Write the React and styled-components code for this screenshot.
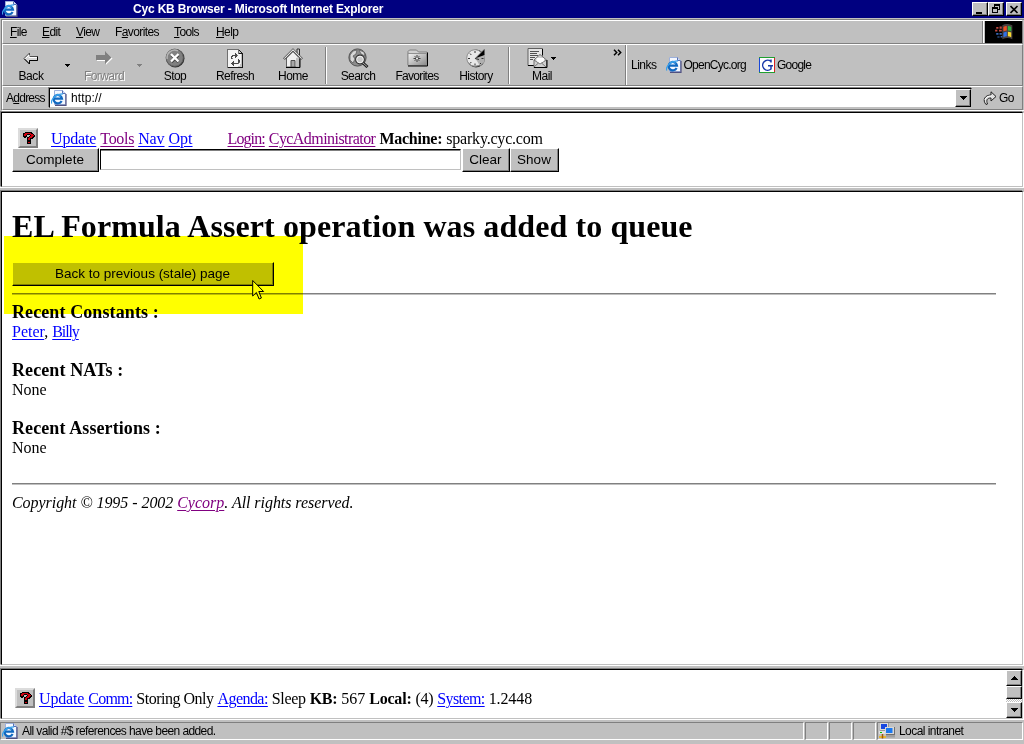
import React from "react";
import styled, { createGlobalStyle, css } from "styled-components";

const GlobalStyle = createGlobalStyle`
  *, *::before, *::after { box-sizing: border-box; }
  body { margin: 0; background: #c0c0c0; overflow: hidden; }
  svg { display: block; flex: none; }
`;

const Window = styled.div`
  width: 1024px;
  height: 744px;
  display: flex;
  flex-direction: column;
  background: #c0c0c0;
  color: #000;
  font: 12px/14px "Liberation Sans", Arial, sans-serif;
  white-space: pre;
`;

const T = styled.span`
  letter-spacing: ${(p) => p.$ls || 0}px;
`;

const TitleBar = styled.header`
  height: 18px;
  flex: none;
  display: flex;
  align-items: center;
  background: #000080;
  padding: 0 2px 0 2px;
`;
const TitleText = styled.div`
  flex: 1;
  padding-left: 115px;
  color: #fff;
  font-weight: bold;
`;
const raised = css`
  background: #c0c0c0;
  border: 1px solid;
  border-color: #fff #000 #000 #fff;
  box-shadow: inset -1px -1px #808080;
`;
const CaptionButton = styled.div`
  ${raised}
  width: 16px;
  height: 14px;
  margin-left: ${(p) => p.$gap || 0}px;
  display: flex;
  align-items: center;
  justify-content: center;
`;

const Chrome = styled.div`
  flex: none;
  height: 92px;
  margin: 1px 0 0 1px;
  display: flex;
  flex-direction: column;
  border-top: 1px solid #808080;
  border-left: 1px solid #808080;
  border-bottom: 1px solid #fff;
`;
const Band = styled.div`
  display: flex;
  height: ${(p) => p.$h}px;
  border: 1px solid;
  border-color: #fff #808080 #808080 #fff;
  margin-right: 1px;
`;
const MenuBar = styled(Band)`
  padding-left: 7px;
`;
const MenuItem = styled.div`
  width: ${(p) => p.$w}px;
  padding-top: 4px;
`;
const Throbber = styled.div`
  margin-left: auto;
  width: 40px;
  padding-left: 2px;
  border-left: 1px solid #808080;
  box-shadow: inset 1px 0 #fff;
`;
const ThrobberBox = styled.div`
  height: 22px;
  background: #000;
  display: flex;
  align-items: center;
  justify-content: center;
`;
const Tool = styled.div`
  width: ${(p) => p.$w}px;
  padding-top: 3px;
  display: flex;
  flex-direction: column;
  align-items: center;
  ${(p) => p.$disabled && "color: #808080; text-shadow: 1px 1px #fff;"}
`;
const ToolIcon = styled.div`
  height: 20px;
  margin-bottom: 1px;
  margin-right: ${(p) => p.$mr || 0}px;
  display: flex;
  align-items: center;
`;
const Drop = styled.div`
  width: ${(p) => p.$w}px;
  padding-top: ${(p) => p.$pt || 19}px;
  margin-left: ${(p) => p.$ml || 0}px;
  display: flex;
  justify-content: center;
`;
const Divider = styled.div`
  width: 2px;
  height: 37px;
  margin: 2px ${(p) => p.$m}px;
  border-left: 1px solid #808080;
  border-right: 1px solid #fff;
`;
const LinksBand = styled.div`
  flex: 1;
  display: flex;
  align-items: center;
  padding-left: 4px;
  border-left: 1px solid #fff;
`;
const Chevron = styled.div`
  padding: 4px 2px 0 0;
  border-right: 1px solid #808080;
`;
const Gap = styled.span`
  width: ${(p) => p.$w}px;
  flex: none;
`;
const AddressField = styled.div`
  width: 923px;
  height: 20px;
  margin-left: 2px;
  padding-left: 1px;
  display: flex;
  align-items: center;
  background: #fff;
  border: 1px solid;
  border-color: #000 #c0c0c0 #c0c0c0 #000;
  box-shadow: -1px -1px #808080;
  margin-top: 1px;
`;
const ComboButton = styled.div`
  ${raised}
  width: 16px;
  height: 18px;
  margin-left: auto;
  display: flex;
  align-items: center;
  justify-content: center;
`;
const AddressLabel = styled.div`
  width: 44px;
  padding: 4px 0 0 3px;
`;
const Go = styled.div`
  display: flex;
  padding: 4px 0 0 11px;
`;

const Frame = styled.section`
  position: relative;
  flex: none;
  height: ${(p) => p.$h}px;
  background: #fff;
  border-top: 1px solid #000;
  border-left: 1px solid #000;
  border-bottom: 1px solid #c0c0c0;
  border-right: 1px solid #c0c0c0;
  margin: 1px 1px 0 1px;
  box-shadow: -1px -1px #808080, 1px 1px #fff;
  font: 16px/19px "Liberation Serif", "Times New Roman", serif;
`;
const Splitter = styled.div`
  height: 3px;
  flex: none;
  border-top: 1px solid #fff;
`;
const Link = styled.a`
  color: ${(p) => (p.$visited ? "#800080" : "#0000ff")};
  text-decoration: underline;
  text-decoration-thickness: 1px;
  text-underline-offset: 2px;
  letter-spacing: ${(p) => p.$ls || 0}px;
`;
const Bold = styled.b`
  letter-spacing: ${(p) => p.$ls || 0}px;
`;
const NavRow = styled.div`
  display: flex;
  align-items: center;
  height: 20px;
  margin: ${(p) => p.$m};
`;
const QueryRow = styled.div`
  display: flex;
  margin: 0 0 0 10px;
`;
const PageButton = styled.button`
  ${raised}
  width: ${(p) => p.$w}px;
  height: 24px;
  margin: 0;
  padding: 0 1px 0 0;
  border-width: 1px;
  font: 13.5px/18px "Liberation Sans", Arial, sans-serif;
  color: #000;
  white-space: pre;
  text-align: center;
`;
const QueryInput = styled.div`
  width: 361px;
  height: 21px;
  margin: 1px 1px 0 1px;
  border: 1px solid;
  border-color: #000 #c0c0c0 #c0c0c0 #000;
  box-shadow: inset 0 1px #808080;
`;
const HelpBox = styled.div`
  width: 20px;
  height: 20px;
  background: #c0c0c0;
  border: 2px solid;
  border-color: #dcdcdc #808080 #808080 #dcdcdc;
  display: flex;
  align-items: center;
  justify-content: center;
`;
const H1 = styled.h1`
  margin: 0;
  padding: 16px 0 0 10px;
  font-size: 32px;
  line-height: 37px;
  font-weight: bold;
  letter-spacing: 0.09px;
`;
const StaleRow = styled.div`
  padding: 17px 0 0 10px;
  display: flex;
`;
const Rule = styled.div`
  height: 2px;
  width: 984px;
  margin: 7px 0 0 10px;
  background: #c0c0c0;
  border-top: 1px solid #808080;
`;
const Recents = styled.div`
  padding: 7px 0 0 10px;
`;
const Block = styled.div`
  height: 58px;
`;
const BlockTitle = styled.h2`
  margin: 0;
  font-size: 18px;
  line-height: 20px;
  letter-spacing: 0.1px;
`;
const Copyright = styled.p`
  margin: 0;
  padding: 8px 0 0 10px;
  font-style: italic;
  letter-spacing: -0.05px;
`;
const Highlight = styled.div`
  position: absolute;
  left: 2px;
  top: 44px;
  width: 299px;
  height: 78px;
  background: #ffff00;
  mix-blend-mode: multiply;
`;
const Pointer = styled.div`
  position: absolute;
  left: 250px;
  top: 87px;
`;
const BottomFrame = styled(Frame)`
  display: flex;
`;
const ScrollBar = styled.div`
  width: 16px;
  margin-left: auto;
  display: flex;
  flex-direction: column;
  background: repeating-conic-gradient(#c0c0c0 0 25%, #fff 0 50%) 0 0 / 2px 2px;
`;
const ScrollPart = styled.div`
  ${raised}
  height: ${(p) => p.$h}px;
  margin-top: ${(p) => p.$mt || 0};
  display: flex;
  align-items: center;
  justify-content: center;
`;
const StatusBar = styled.footer`
  flex: none;
  height: 24px;
  padding-top: 2px;
  border-top: 1px solid #fff;
  display: flex;
`;
const StatusCell = styled.div`
  width: ${(p) => p.$w}px;
  height: 18px;
  margin-right: 1px;
  padding-left: ${(p) => p.$pl || 0}px;
  display: flex;
  align-items: center;
  border: 1px solid;
  border-color: #808080 #fff #fff #808080;
`;

const Pixels = ({ rows, colors }) => (
  <svg width={rows[0].length} height={rows.length} shapeRendering="crispEdges">
    {rows.flatMap((row, y) =>
      [...row].map((c, x) =>
        colors[c] ? <rect key={`${x}-${y}`} x={x} y={y} width="1" height="1" fill={colors[c]} /> : null
      )
    )}
  </svg>
);

const Question = () => (
  <Pixels
    colors={{ b: "#000", r: "#d00010" }}
    rows={[
      "...bbbbbbb...",
      ".bbrrrrrrbb..",
      ".brrrbbbrrrb.",
      ".brrb...brrrb",
      ".bbbb..brrrbb",
      "..bb.bbrrrbb.",
      ".....brrbbb..",
      ".....brrb....",
      ".....bbbb....",
      ".....bbbb....",
      ".....brrb....",
      ".....bbbb....",
    ]}
  />
);
const RefreshIcon = () => (
  <Pixels
    colors={{ k: "#181818", g: "#707070", w: "#f4f4f4", l: "#c4c4c4", d: "#484848" }}
    rows={[
      "gggggggggggg.....",
      "gwwwwwwwwwwgk....",
      "gwwwwwwwwwwglk...",
      "gwwwwwwwwwwgllk..",
      "gwwwwwwwdwwgkkkk.",
      "gwwwwwwwddwwwwlk.",
      "gwwwwdddddgwwwlk.",
      "gwwwddwwddwwwwlk.",
      "gwwwdwwwdwwwwwlk.",
      "gwwwdgwwwwwwwwlk.",
      "gwwwwwwwwwwdwwlk.",
      "gwwwwwwwwwwddwlk.",
      "gwwwwwdwwwwddwlk.",
      "gwwwwddwwwwdgwlk.",
      "gwwwdddddddgwwlk.",
      "gwwwwddwwwwwwllk.",
      "gwwwwwdwwwwwwllk.",
      "gwwwwwwwwwwllllk.",
      "gkkkkkkkkkkkkkkk.",
    ]}
  />
);
const Down = ({ c = "#000" }) => (
  <svg width="5" height="3" shapeRendering="crispEdges">
    <path d="M0 0h5v1H0zM1 1h3v1H1zM2 2h1v1H2z" fill={c} />
  </svg>
);
const Arrow = ({ up }) => (
  <svg width="7" height="4" shapeRendering="crispEdges">
    <path d={up ? "M3 0h1v1H3zM2 1h3v1H2zM1 2h5v1H1zM0 3h7v1H0z" : "M0 0h7v1H0zM1 1h5v1H1zM2 2h3v1H2zM3 3h1v1H3z"} />
  </svg>
);
const IEPage = () => (
  <svg width="16" height="16" viewBox="0 0 16 16">
    <path d="M3.500.5h8l3 3v11h-11z" fill="#f4f8ff" stroke="#9cb0dc" />
    <path d="M11.500.5v3h3" fill="#d0dcfc" stroke="#5870b0" />
    <path d="M15 4v11.300H4" fill="none" stroke="#505080" strokeWidth="1.200" />
    <path d="M10.600 11A4.200 4.200 0 1 1 11 8.600H3.500" fill="none" stroke="#1068c0" strokeWidth="2.200" />
    <path d="M9.800 6.300A4 4 0 0 0 3 7" fill="none" stroke="#48b0f0" strokeWidth="1" />
    <path d="M.9 13.500C-1 10.500 4.500 3.800 12 3.800" fill="none" stroke="#38a0ec" strokeWidth="1.200" />
  </svg>
);
const GoogleIcon = () => (
  <svg width="16" height="16" viewBox="0 0 16 16">
    <path d="M0 0h16v16H0z" fill="#fff" />
    <path d="M.5 0v16" stroke="#1848d8" />
    <path d="M0 .5h16M0 15.500h16" stroke="#20a030" />
    <path d="M15.500 1v14" stroke="#d82020" />
    <path d="M12 5.500V2.500M12 4.500A5 5 0 1 0 12 12V8.800M9 8.700h5" fill="none" stroke="#1838a8" strokeWidth="1.500" />
  </svg>
);
const BackIcon = () => (
  <svg width="16" height="13" viewBox="0 0 16 13">
    <path d="M1 6.500L6.500 1v3.500h8v4h-8V12z" fill="#d8d8d8" stroke="#505050" />
    <path d="M2.500 6.500L6 3v2.500h8" fill="none" stroke="#fff" />
    <path d="M1.500 7L6.500 12v-3.500h8v-4" fill="none" stroke="#000" />
  </svg>
);
const ForwardIcon = () => (
  <svg width="17" height="14" viewBox="0 0 17 14">
    <path d="M1 5h9V1l6.500 6.500-6.500 6.200V10H1z" fill="#fff" />
    <path d="M0 4h9V0l6.500 6.500L9 13V9H0z" fill="#808080" />
  </svg>
);
const StopIcon = () => (
  <svg width="20" height="20" viewBox="0 0 20 20">
    <circle cx="10.300" cy="10.300" r="9.200" fill="#303030" />
    <circle cx="9.700" cy="9.700" r="8.600" fill="#808080" stroke="#606060" />
    <path d="M2.200 11A7.600 7.600 0 0 1 13 2.800" fill="none" stroke="#b4b4b4" strokeWidth="1.500" />
    <path d="M6.500 7l7 7M13.500 7l-7 7" stroke="#404040" strokeWidth="3" />
    <path d="M6 6l7.500 7.500M13.500 6L6 13.500" stroke="#fff" strokeWidth="2.300" />
  </svg>
);
const HomeIcon = () => (
  <svg width="20" height="20" viewBox="0 0 20 20">
    <path d="M14 1h2.500v7H14z" fill="#d0d0d0" stroke="#303030" />
    <path d="M3.500 10L10 3.500l6.500 6.500v9h-13z" fill="#f0f0f0" stroke="#606060" />
    <path d="M13 10l3-1v9.500h-3z" fill="#c0c0c0" />
    <path d="M1 11L10 2l9 9" fill="none" stroke="#303030" strokeWidth="2.400" />
    <path d="M1.300 10.600L10 1.900l8.700 8.700" fill="none" stroke="#e8e8e8" strokeWidth="1.100" />
    <path d="M8 12.500h4V19H8z" fill="#a8a8a8" stroke="#505050" />
    <path d="M3 19.500h14V11" fill="none" stroke="#000" />
  </svg>
);
const SearchIcon = () => (
  <svg width="21" height="20" viewBox="0 0 21 20">
    <circle cx="9.500" cy="9.500" r="8.600" fill="#8c8c8c" stroke="#505050" />
    <path d="M2 7l3-4 4-1-1 4-3 2 2 3-2 4-3-3zM11 2l5 2 1 4-4-2z" fill="#d8d8d8" stroke="#606060" strokeWidth=".8" />
    <path d="M15 15l4.500 4" stroke="#202020" strokeWidth="3" />
    <path d="M15 15l4 3.500" stroke="#b0b0b0" />
    <circle cx="12" cy="11.500" r="4.300" fill="#c8c8c8" stroke="#303030" strokeWidth="1.200" />
    <circle cx="12" cy="11.500" r="3.300" fill="none" stroke="#f4f4f4" />
  </svg>
);
const FavoritesIcon = () => (
  <svg width="21" height="18" viewBox="0 0 21 18">
    <defs>
      <linearGradient id="folder" x2="1" y2="1">
        <stop stopColor="#f4f4f4" />
        <stop offset="1" stopColor="#888" />
      </linearGradient>
    </defs>
    <path d="M1 16V2.500L2.500 1h7l2 2H20v13z" fill="#d0d0d0" stroke="#808080" />
    <path d="M1 4.500h18.500v12H1z" fill="url(#folder)" stroke="#909090" />
    <path d="M1 17h19.500V3.500" fill="none" stroke="#000" />
    <path d="M10 6v7M6.500 9.500h7M7.700 7.200l4.600 4.600M12.300 7.200l-4.600 4.600" stroke="#303030" strokeWidth=".9" />
    <circle cx="10" cy="9.500" r="1" fill="#fff" />
  </svg>
);
const HistoryIcon = () => (
  <svg width="20" height="20" viewBox="0 0 20 20">
    <circle cx="10" cy="10.500" r="9" fill="#383838" />
    <circle cx="9" cy="10" r="8.300" fill="#e8e8e8" stroke="#909090" />
    <path d="M9.500 10.500L19 6l-.5 8-4.500 4z" fill="#b0b0b0" />
    <path d="M9 10.500L18.500 1v6z" fill="#000" />
    <path d="M9 10.500l9-9" stroke="#a0a0a0" strokeWidth=".7" />
    <path d="M9 3v2M9 15.500v2M2 10.500h2M4 5.500L5.300 7M4 15.500L5.300 14M15.500 10.500h2M14 15l1 1" stroke="#303030" />
    <path d="M9 10.500l4 1" stroke="#303030" />
  </svg>
);
const MailIcon = () => (
  <svg width="21" height="20" viewBox="0 0 21 20">
    <path d="M1 .5h14.500v17H1z" fill="#e4e4e4" stroke="#606060" />
    <path d="M3 3.500h9M3 5.500h7M3 7.500h8M3 9.500h5M3 11.500h3" stroke="#505050" />
    <path d="M15.500 1v6M1 17.500h6" stroke="#000" />
    <path d="M7 12L13 6.500l6.500 5.500v7.500H7z" fill="#d0d0d0" stroke="#707070" />
    <path d="M9.500 10h7.500v4l-4 2-3.500-2z" fill="#fcfcfc" />
    <path d="M7 12l6 4 6.500-4M7 19l4.500-4M19 19l-4.500-4" fill="none" stroke="#606060" strokeWidth=".8" />
    <path d="M7 19.500h13V12" fill="none" stroke="#000" />
  </svg>
);
const GoIcon = () => (
  <svg width="14" height="15" viewBox="0 0 14 15">
    <path d="M3 13.500C-1 9 2 4 8 4V.8L13 5.500 8 10V7C4 7 3 9 4.500 13z" fill="#e0e0e0" stroke="#202020" strokeWidth="1" />
    <path d="M2 9c.5-3 3-4 6.500-4" fill="none" stroke="#fff" />
  </svg>
);
const WindowsFlag = () => (
  <svg width="20" height="18" viewBox="0 0 18 16">
    <path d="M7.500 2c2.500-1.500 5-1.500 9 0v12.500c-3-1.500-5.500-1.500-9 0z" fill="#484040" />
    <path d="M8.500 3.500c1-.8 2-1 3-.9v4c-1 0-2 .2-3 .8z" fill="#f05020" />
    <path d="M12.500 2.600c1 0 2 .3 3 .8v4c-1-.5-2-.8-3-.8z" fill="#30b040" />
    <path d="M8.500 8.600c1-.7 2-.9 3-.9v4.200c-1 0-2 .2-3 .8z" fill="#3070e8" />
    <path d="M12.500 7.700c1 0 2 .3 3 .8v4.200c-1-.5-2-.8-3-.8z" fill="#f8d830" />
    <path d="M2 3.500h2v1.500H2zM5 3h2v2H5zM1 6h2v1.500H1zM4.500 6h2.500v1.500H4.500z" fill="#c04840" />
    <path d="M2 9h2v1.500H2zM5 9h2v1.500H5zM3 12h2v1H3zM6 11.500h1.500V13H6z" fill="#3868b8" />
  </svg>
);
const CursorIcon = () => (
  <svg width="13" height="21" viewBox="0 0 13 21">
    <path d="M.7 1.500v15.500l3.700-3.500 2.700 6.500 2.300-1L6.800 12.500h4.800z" fill="#fff" stroke="#000" />
  </svg>
);
const IntranetIcon = () => (
  <svg width="16" height="16" viewBox="0 0 16 16">
    <path d="M1 0h9v8H1z" fill="#989898" />
    <path d="M1 0h8v7H1z" fill="#dcdcdc" />
    <path d="M2 1h6v5H2z" fill="#1848e0" />
    <path d="M0 8h8v3H0z" fill="#e0e0e0" />
    <path d="M7 4h9v8H7z" fill="#707070" />
    <path d="M6 4h9v7H6z" fill="#d8d8d8" />
    <path d="M7 5h6.500v5H7z" fill="#1878f0" />
    <path d="M7 12h9v2.500H7z" fill="#a0a0a0" />
    <path d="M0 14h7" stroke="#f0b000" strokeWidth="1.500" />
    <path d="M3.500 11v4.500" stroke="#a05800" strokeWidth="1.500" />
    <path d="M1 9.500h2" stroke="#00c000" />
  </svg>
);

const menus = [
  ["F", "ile", 32, ""],
  ["E", "dit", 34, ""],
  ["V", "iew", 39, ""],
  ["a", "vorites", 59, "F"],
  ["T", "ools", 42, ""],
  ["H", "elp", 40, ""],
];

const ToolItem = ({ icon, label, w, ls = -0.55, disabled, mr }) => (
  <Tool $w={w} $disabled={disabled}>
    <ToolIcon $mr={mr}>{icon}</ToolIcon>
    <T $ls={ls}>{label}</T>
  </Tool>
);

export default function App() {
  return (
    <Window>
      <GlobalStyle />
      <TitleBar>
        <IEPage />
        <TitleText><T $ls={-0.18}>Cyc KB Browser - Microsoft Internet Explorer</T></TitleText>
        <CaptionButton>
          <svg width="10" height="10" shapeRendering="crispEdges"><path d="M1 8h6v2H1z" /></svg>
        </CaptionButton>
        <CaptionButton>
          <svg width="10" height="10" shapeRendering="crispEdges">
            <path d="M3 0h6v2H3zM3 2h1v1H3zM8 1h1v5H8zM7 5h2v1H7zM1 3h6v2H1zM1 4h1v5H1zM6 4h1v5H6zM1 8h6v1H1z" />
          </svg>
        </CaptionButton>
        <CaptionButton $gap={2}>
          <svg width="9" height="9"><path d="M.5 1l7 7M7.500 1l-7 7" stroke="#000" strokeWidth="1.600" /></svg>
        </CaptionButton>
      </TitleBar>

      <Chrome>
        <MenuBar $h={24}>
          {menus.map(([u, rest, w, pre]) => (
            <MenuItem key={rest} $w={w}>
              <T $ls={-0.6}>{pre}<u>{u}</u>{rest}</T>
            </MenuItem>
          ))}
          <Throbber><ThrobberBox><WindowsFlag /></ThrobberBox></Throbber>
        </MenuBar>
        <Band $h={42}>
          <ToolItem icon={<BackIcon />} label="Back" w={56} ls={-0.4} />
          <Drop $w={16}><Down /></Drop>
          <ToolItem icon={<ForwardIcon />} label="Forward" w={58} disabled />
          <Drop $w={12}><Down c="#808080" /></Drop>
          <ToolItem icon={<StopIcon />} label="Stop" w={60} />
          <ToolItem icon={<RefreshIcon />} label="Refresh" w={60} />
          <ToolItem icon={<HomeIcon />} label="Home" w={56} />
          <Divider $m={4} />
          <ToolItem icon={<SearchIcon />} label="Search" w={54} />
          <ToolItem icon={<FavoritesIcon />} label="Favorites" w={64} ls={-0.7} />
          <ToolItem icon={<HistoryIcon />} label="History" w={54} />
          <Divider $m={5} />
          <Gap $w={11} />
          <ToolItem icon={<MailIcon />} label="Mail" w={32} mr={10} />
          <Drop $w={5} $ml={-7} $pt={12}><Down /></Drop>
          <Gap $w={57} />
          <Chevron>
            <svg width="10" height="7" viewBox="0 0 10 7"><path d="M1 .8l2.700 2.700L1 6.200M5 .8l2.700 2.700L5 6.200" fill="none" stroke="#000" strokeWidth="1.500" /></svg>
          </Chevron>
          <LinksBand>
            <T $ls={-0.5}>Links</T>
            <Gap $w={9} />
            <IEPage />
            <Gap $w={2} />
            <T $ls={-0.75}>OpenCyc.org</T>
            <Gap $w={13} />
            <GoogleIcon />
            <Gap $w={2} />
            <T $ls={-0.75}>Google</T>
          </LinksBand>
        </Band>
        <Band $h={24}>
          <AddressLabel><T $ls={-0.75}>A<u>d</u>dress</T></AddressLabel>
          <AddressField>
            <IEPage />
            <Gap $w={4} />
            <T $ls={0.1}>http://</T>
            <ComboButton><Arrow /></ComboButton>
          </AddressField>
          <Go><GoIcon /><Gap $w={2} /><T $ls={-0.7}>Go</T></Go>
        </Band>
      </Chrome>

      <Frame $h={75}>
        <NavRow $m="15px 0 0 16px">
          <HelpBox><Question /></HelpBox>
          <Gap $w={13} />
          <Link $ls={-0.15}>Update</Link><Gap $w={4} />
          <Link $visited $ls={-0.3}>Tools</Link><Gap $w={4} />
          <Link $ls={-0.1}>Nav</Link><Gap $w={4} />
          <Link>Opt</Link><Gap $w={35} />
          <Link $visited $ls={-0.9}>Login:</Link><Gap $w={4} />
          <Link $visited $ls={-0.56}>CycAdministrator</Link><Gap $w={4} />
          <Bold $ls={-0.25}>Machine:</Bold><Gap $w={4} />
          <T $ls={-0.2}>sparky.cyc.com</T>
        </NavRow>
        <QueryRow>
          <PageButton $w={87}>Complete</PageButton>
          <QueryInput />
          <PageButton $w={48}>Clear</PageButton>
          <PageButton $w={49}>Show</PageButton>
        </QueryRow>
      </Frame>
      <Splitter />
      <Frame $h={474}>
        <H1>EL Formula Assert operation was added to queue</H1>
        <StaleRow><PageButton $w={262}>Back to previous (stale) page</PageButton></StaleRow>
        <Rule />
        <Recents>
          <Block><BlockTitle>Recent Constants :</BlockTitle><Link>Peter</Link>, <Link $ls={-1.1}>Billy</Link></Block>
          <Block><BlockTitle>Recent NATs :</BlockTitle>None</Block>
          <Block><BlockTitle>Recent Assertions :</BlockTitle>None</Block>
        </Recents>
        <Rule />
        <Copyright>Copyright © 1995 - 2002 <Link $visited>Cycorp</Link>. All rights reserved.</Copyright>
        <Pointer><CursorIcon /></Pointer>
        <Highlight />
      </Frame>
      <Splitter />
      <BottomFrame $h={50}>
        <NavRow $m="18px 0 0 13px">
          <HelpBox><Question /></HelpBox>
          <Gap $w={4} />
          <Link $ls={-0.15}>Update</Link><Gap $w={4} />
          <Link $ls={-0.8}>Comm:</Link><Gap $w={4} />
          <T $ls={-0.5}>Storing Only</T><Gap $w={4} />
          <Link $ls={-0.55}>Agenda:</Link><Gap $w={4} />
          <T $ls={-0.35}>Sleep</T><Gap $w={4} />
          <Bold $ls={-0.3}>KB:</Bold><Gap $w={4} />
          <T>567</T><Gap $w={4} />
          <Bold $ls={-0.2}>Local:</Bold><Gap $w={4} />
          <T $ls={-0.3}>(4)</T><Gap $w={4} />
          <Link $ls={-0.6}>System:</Link><Gap $w={4} />
          <T $ls={-0.1}>1.2448</T>
        </NavRow>
        <ScrollBar>
          <ScrollPart $h={16}><Arrow up /></ScrollPart>
          <ScrollPart $h={13} />
          <ScrollPart $h={16} $mt="auto"><Arrow /></ScrollPart>
        </ScrollBar>
      </BottomFrame>
      <StatusBar>
        <StatusCell $w={804} $pl={1}><IEPage /><Gap $w={4} /><T $ls={-0.6}>All valid #$ references have been added.</T></StatusCell>
        <StatusCell $w={23} />
        <StatusCell $w={23} />
        <StatusCell $w={23} />
        <StatusCell $w={146} $pl={1}><IntranetIcon /><Gap $w={4} /><T $ls={-0.55}>Local intranet</T></StatusCell>
      </StatusBar>
    </Window>
  );
}
